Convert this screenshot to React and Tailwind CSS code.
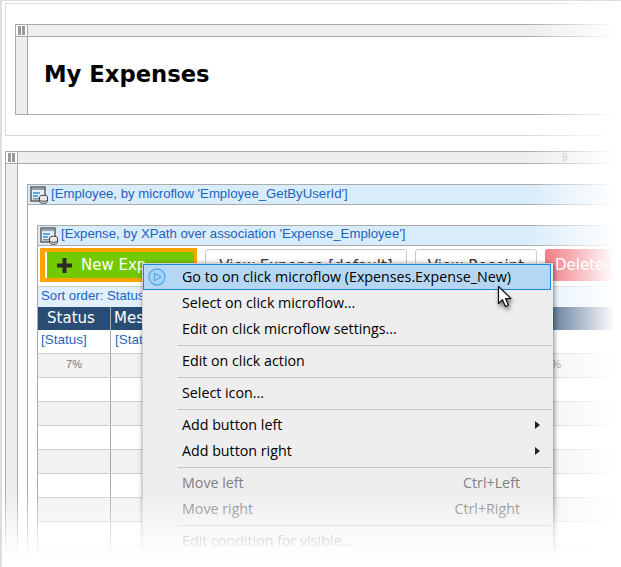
import React from 'react';

const PauseCell = () => (
  <div className="w-[12px] h-full shrink-0 border-r border-[#aaa] bg-white flex items-center justify-center gap-[1px]">
    <span className="w-[3px] h-[9px] bg-[#9a9a9a]" />
    <span className="w-[3px] h-[9px] bg-[#9a9a9a]" />
  </div>
);

const FrameHeader = ({ children }) => (
  <div className="relative h-[11px] bg-[#eeeeee] border-y border-[#aaa] flex box-content">
    <PauseCell />
    {children}
  </div>
);

const DataIcon = () => (
  <svg width="18" height="18" viewBox="0 0 18 18" className="shrink-0">
    <rect x="1" y="1" width="14" height="14" fill="#e6eef5" stroke="#555" strokeWidth="1.4" />
    <rect x="2" y="2" width="12" height="2" fill="#8fa3b5" />
    <rect x="3" y="6" width="7" height="2" fill="#5aa7e0" />
    <rect x="3" y="9" width="5" height="2" fill="#5aa7e0" />
    <rect x="3" y="12" width="6" height="1.5" fill="#888" />
    <ellipse cx="13.5" cy="11" rx="4" ry="1.8" fill="#e8e8e8" stroke="#444" />
    <path d="M9.5 11v4.5c0 1 1.8 1.8 4 1.8s4-.8 4-1.8V11" fill="#e8e8e8" stroke="#444" />
    <path d="M9.5 13.5c0 1 1.8 1.8 4 1.8s4-.8 4-1.8" fill="none" stroke="#444" />
  </svg>
);

const DataHeader = ({ text, lift }) => (
  <div className="h-[19px] bg-[#d9ecfb] border-b border-[#aaa] flex items-center pl-[2px] gap-[3px] box-content font-['Liberation_Sans',sans-serif] text-[13.2px] text-[#1c63c0]">
    <DataIcon />
    <span className={`whitespace-nowrap ${lift}`}>{text}</span>
  </div>
);

const Cell = ({ children, className = '' }) => (
  <div className={`h-full border-r border-[#aaa] shrink-0 ${className}`}>{children}</div>
);

const TableRow = ({ shaded }) => (
  <div className={`flex h-[24px] border-b border-[#cfcfcf] ${shaded ? 'bg-[#f2f2f2]' : 'bg-white'}`}>
    <Cell className="w-[73px]" />
  </div>
);

const MENU = [
  { label: 'Go to on click microflow (Expenses.Expense_New)', active: true },
  { label: 'Select on click microflow...' },
  { label: 'Edit on click microflow settings...' },
  { sep: true },
  { label: 'Edit on click action' },
  { sep: true },
  { label: 'Select icon...' },
  { sep: true },
  { label: 'Add button left', sub: true },
  { label: 'Add button right', sub: true },
  { sep: true },
  { label: 'Move left', hint: 'Ctrl+Left', off: true },
  { label: 'Move right', hint: 'Ctrl+Right', off: true },
  { sep: true },
  { label: 'Edit condition for visible...', off: true },
];

const ContextMenu = () => (
  <div className="absolute z-20 left-[140px] top-[262px] w-[411px] h-[294px] overflow-hidden bg-[#eeeeee] border-l border-t border-[#d0d0d0] pr-[2px] shadow-[1px_1px_5px_rgba(0,0,0,0.5)] font-['Open_Sans',sans-serif] text-[14.25px] text-black">
    {MENU.map((item, i) =>
      item.sep ? (
        <div key={i} className="h-[6px] flex items-center pl-[35px]">
          <div className="h-px w-full bg-[#c4c4c4]" />
        </div>
      ) : (
        <div
          key={i}
          className={`relative h-[26px] flex items-center pl-[38px] pr-[30px] whitespace-nowrap border ${
            item.active ? 'bg-[#b6d7f3] border-[#1a86dc]' : 'border-transparent'
          } ${item.off ? 'text-[#808080]' : ''}`}
        >
          {item.active && (
            <svg width="18" height="18" viewBox="0 0 18 18" className="absolute left-[4px] top-[3px]">
              <circle cx="9" cy="9" r="8" fill="#a9d3f5" stroke="#58aef0" strokeWidth="1.4" />
              <path d="M6.5 5.2v7.6L13 9z" fill="none" stroke="#58aef0" strokeWidth="1.3" strokeLinejoin="round" />
            </svg>
          )}
          <span className="flex-1">{item.label}</span>
          {item.hint && <span>{item.hint}</span>}
          {item.sub && (
            <span className="absolute right-[10px] top-[8px] w-0 h-0 border-y-[4.5px] border-y-transparent border-l-[5px] border-l-[#222]" />
          )}
        </div>
      )
    )}
  </div>
);

const Cursor = () => (
  <svg width="22" height="26" viewBox="0 0 22 26" className="absolute z-30 left-[494px] top-[284px] drop-shadow-[1px_3px_2px_rgba(0,0,0,0.55)]">
    <path d="M2.5 1.5v17l4-3.8 3 6.8 3-1.3-3-6.6h5.5z" fill="#fff" stroke="#111" strokeWidth="1.2" strokeLinejoin="round" />
  </svg>
);

export default function App() {
  return (
    <div className="relative w-[621px] h-[567px] overflow-hidden bg-white border-l-[2px] border-t border-[#dddddd]">
      {/* page title block */}
      <div className="ml-[3px] mt-[2px] h-[133px] border-l border-y border-[#d9d9d9] pl-[9px] pt-[20px]">
        <div className="h-[91px] border-l border-[#aaa]">
          <FrameHeader />
          <div className="flex h-[78px] border-b border-[#aaa]">
            <div className="w-[12px] bg-[#eeeeee] border-r border-[#aaa] shrink-0" />
            <h1 className="pl-[16px] pb-[2px] flex items-center font-['DejaVu_Sans',sans-serif] font-bold text-[22.7px] text-black">My Expenses</h1>
          </div>
        </div>
      </div>

      {/* content block */}
      <div className="ml-[3px] mt-[15px] border-l border-[#aaa] h-[420px]">
        <FrameHeader>
          <span className="absolute left-[556px] top-0 text-[10px] leading-[11px] text-[#aaa] font-['Liberation_Sans',sans-serif]">9</span>
        </FrameHeader>
        <div className="flex h-[405px]">
          <div className="w-[12px] bg-[#eeeeee] border-r border-[#aaa] shrink-0" />
          <div className="flex-1 pl-[9px] pt-[20px]">
            <div className="border-l border-t border-[#aaa] h-[400px]">
              <DataHeader text="[Employee, by microflow 'Employee_GetByUserId']" lift="-mt-[2px]" />
              <div className="pl-[9px] pt-[20px]">
                <div className="border-l border-t border-[#aaa] h-[360px]">
                  <DataHeader text="[Expense, by XPath over association 'Expense_Employee']" lift="-mt-[3px]" />

                  {/* buttons */}
                  <div className="h-[38px] border-b border-[#cfcfcf] flex items-start pl-[2px] pt-[2px] gap-[8px] font-['DejaVu_Sans',sans-serif] text-[15px] box-content">
                    <div className="w-[157px] h-[34px] border-[3px] border-t-[4px] border-b-[4px] border-l-[5px] border-[#ffa500] flex shrink-0">
                      <div className="w-[2px] bg-white" />
                      <div className="flex-1 bg-[#73c900] flex items-center pl-[10px] gap-[9px] text-white whitespace-nowrap overflow-hidden">
                        <svg width="15" height="15" viewBox="0 0 15 15" className="shrink-0">
                          <path d="M5.5 0h4v5.5H15v4H9.5V15h-4V9.5H0v-4h5.5z" fill="#2b2b2b" />
                        </svg>
                        <span className="w-[65px] overflow-hidden">New Expense</span>
                      </div>
                    </div>
                    <div className="w-[202px] h-[32px] mt-[1px] border border-[#c8c8c8] rounded-[3px] shrink-0 flex items-center justify-center pt-[2px] text-[#333] whitespace-nowrap">
                      View Expense [default]
                    </div>
                    <div className="w-[122px] h-[32px] mt-[1px] border border-[#c8c8c8] rounded-[3px] shrink-0 flex items-center justify-center pt-[2px] text-[#333] whitespace-nowrap">
                      View Receipt
                    </div>
                    <div className="w-[130px] h-[32px] mt-[1px] rounded-[3px] bg-[#ef5a65] shrink-0 flex items-center pl-[10px] text-white whitespace-nowrap">
                      Delete Expense
                    </div>
                  </div>

                  {/* sort order */}
                  <div className="h-[20px] bg-[#e1f0fc] flex items-center pl-[3px] pb-[2px] font-['Liberation_Sans',sans-serif] text-[13.2px] text-[#1c63c0] whitespace-nowrap">
                    Sort order: Status (asc)
                  </div>

                  {/* table */}
                  <div className="flex h-[23px] bg-[#2a4d75] text-white font-['DejaVu_Sans',sans-serif] text-[15px] leading-[22px]">
                    <Cell className="w-[73px] text-center pr-[6px] border-[#8aa0b8]">Status</Cell>
                    <div className="pl-[3px] whitespace-nowrap">Message</div>
                  </div>
                  <div className="flex h-[24px] border-b border-[#cfcfcf] font-['Liberation_Sans',sans-serif] text-[13.5px] text-[#2a66b5] leading-[20px]">
                    <Cell className="w-[73px] pl-[3px]">[Status]</Cell>
                    <div className="pl-[4px] whitespace-nowrap">[Status]</div>
                  </div>
                  <div className="flex h-[24px] border-b border-[#cfcfcf] bg-[#f2f2f2] font-['Liberation_Sans',sans-serif] text-[11px] text-[#777] leading-[21px]">
                    <Cell className="w-[73px] text-center">7%</Cell>
                    <div className="w-[450px] text-right whitespace-nowrap">9%</div>
                  </div>
                  {[false, true, false, true, false, true, false, true].map((shaded, i) => (
                    <TableRow key={i} shaded={shaded} />
                  ))}
                </div>
              </div>
            </div>
          </div>
        </div>
      </div>

      {/* right edge fade */}
      <div className="absolute z-10 top-0 bottom-0 left-[525px] right-0 bg-gradient-to-r from-white/0 to-white to-[93%]" />

      <ContextMenu />
      <Cursor />

      {/* bottom fade */}
      <div className="absolute z-40 left-0 right-0 top-[490px] h-[66px] bg-gradient-to-b from-white/0 to-white" />
      <div className="absolute z-40 left-0 right-0 top-[555px] bottom-0 bg-white" />
    </div>
  );
}
